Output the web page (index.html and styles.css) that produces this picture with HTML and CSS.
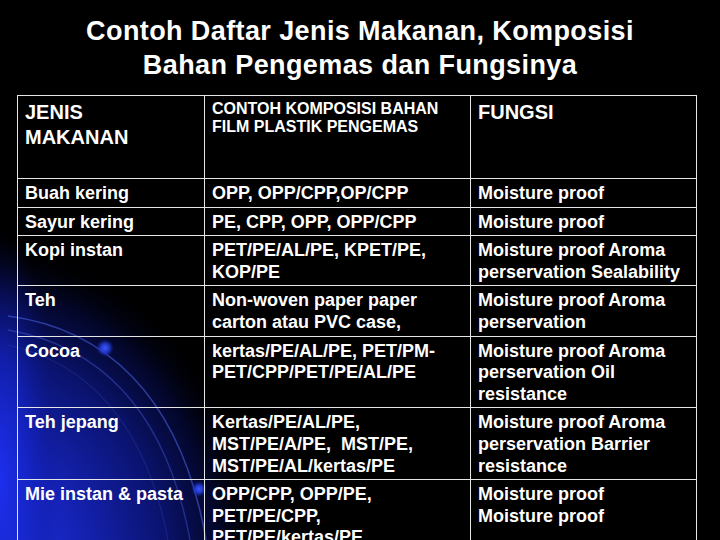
FILE: index.html
```html
<!DOCTYPE html>
<html>
<head>
<meta charset="utf-8">
<link rel="stylesheet" href="styles.css">
</head>
<body>
<div class="slide">
  <svg class="bg" width="720" height="540" viewBox="0 0 720 540" aria-hidden="true">
    <defs>
      <radialGradient id="g1">
        <stop offset="0" stop-color="#2436f0"/>
        <stop offset="0.35" stop-color="#1624bc"/>
        <stop offset="0.65" stop-color="#0b1472"/>
        <stop offset="0.85" stop-color="#030628"/>
        <stop offset="1" stop-color="#000000" stop-opacity="0"/>
      </radialGradient>
      <radialGradient id="g2">
        <stop offset="0" stop-color="#1e30f0" stop-opacity="0.95"/>
        <stop offset="0.5" stop-color="#1424c8" stop-opacity="0.6"/>
        <stop offset="1" stop-color="#0a1280" stop-opacity="0"/>
      </radialGradient>
      <radialGradient id="dot">
        <stop offset="0" stop-color="#3a58ff"/>
        <stop offset="0.5" stop-color="#2640e0" stop-opacity="0.8"/>
        <stop offset="1" stop-color="#1020a0" stop-opacity="0"/>
      </radialGradient>
    </defs>
    <rect width="720" height="540" fill="#000"/>
    <ellipse cx="-30" cy="570" rx="295" ry="335" fill="url(#g1)"/>
    <ellipse cx="0" cy="480" rx="60" ry="250" fill="url(#g2)"/>
    <path d="M 8 316 C 100 328, 180 390, 206 540" fill="none" stroke="#4a62e8" stroke-opacity="0.55" stroke-width="1.6"/>
    <path d="M 8 330 C 95 345, 165 405, 190 540" fill="none" stroke="#4a62e8" stroke-opacity="0.4" stroke-width="1.4"/>
    <path d="M 8 345 C 85 362, 145 420, 168 540" fill="none" stroke="#3a52d8" stroke-opacity="0.25" stroke-width="1.2"/>
    <circle cx="105" cy="348" r="9" fill="url(#dot)"/>
    <circle cx="199" cy="489" r="8" fill="url(#dot)"/>
  </svg>

  <div class="content">
    <h1 class="title">Contoh Daftar Jenis Makanan, Komposisi<br>Bahan Pengemas dan Fungsinya</h1>

    <table class="grid">
      <colgroup>
        <col class="c1"><col class="c2"><col class="c3">
      </colgroup>
      <tr class="head">
        <td class="h-big">JENIS<br>MAKANAN</td>
        <td class="h-small">CONTOH KOMPOSISI BAHAN<br>FILM PLASTIK PENGEMAS</td>
        <td class="h-big">FUNGSI</td>
      </tr>
      <tr>
        <td>Buah kering</td>
        <td>OPP, OPP/CPP,OP/CPP</td>
        <td>Moisture proof</td>
      </tr>
      <tr>
        <td>Sayur kering</td>
        <td>PE, CPP, OPP, OPP/CPP</td>
        <td>Moisture proof</td>
      </tr>
      <tr>
        <td>Kopi instan</td>
        <td>PET/PE/AL/PE, KPET/PE,<br>KOP/PE</td>
        <td>Moisture proof Aroma<br>perservation Sealability</td>
      </tr>
      <tr>
        <td>Teh</td>
        <td>Non-woven paper paper<br>carton atau PVC case,</td>
        <td>Moisture proof Aroma<br>perservation</td>
      </tr>
      <tr>
        <td>Cocoa</td>
        <td>kertas/PE/AL/PE, PET/PM-<br>PET/CPP/PET/PE/AL/PE</td>
        <td>Moisture proof Aroma<br>perservation Oil<br>resistance</td>
      </tr>
      <tr>
        <td>Teh jepang</td>
        <td>Kertas/PE/AL/PE,<br>MST/PE/A/PE,&nbsp; MST/PE,<br>MST/PE/AL/kertas/PE</td>
        <td>Moisture proof Aroma<br>perservation Barrier<br>resistance</td>
      </tr>
      <tr>
        <td>Mie instan &amp; pasta</td>
        <td>OPP/CPP, OPP/PE,<br>PET/PE/CPP,<br>PET/PE/kertas/PE</td>
        <td>Moisture proof<br>Moisture proof</td>
      </tr>
    </table>
  </div>
</div>
</body>
</html>
```

FILE: styles.css
```css
html, body {
  margin: 0;
  padding: 0;
  background: #000;
}

.slide {
  position: relative;
  width: 720px;
  height: 540px;
  overflow: hidden;
  background: #000;
  font-family: "Liberation Sans", Arial, sans-serif;
  color: #ffffff;
}

.bg {
  position: absolute;
  left: 0;
  top: 0;
  display: block;
}

.content {
  position: relative;
  padding-top: 14px;
}

.title {
  margin: 0;
  font-size: 27px;
  font-weight: bold;
  line-height: 34px;
  letter-spacing: 0.4px;
  text-align: center;
  padding-left: 0;
}

.grid {
  margin: 13px 0 0 17px;
  width: 679px;
  table-layout: fixed;
  border-collapse: collapse;
  border: 1px solid #e6e6e6;
}

.c1 { width: 187px; }
.c2 { width: 266px; }
.c3 { width: 226px; }

.grid td {
  border: 1px solid #e6e6e6;
  padding: 4px 4px 2px 7px;
  vertical-align: top;
  font-size: 18px;
  font-weight: bold;
  line-height: 21.6px;
  white-space: nowrap;
  overflow: hidden;
}

.grid .head td {
  padding-bottom: 28px;
}

.grid td.h-big {
  font-size: 20px;
  line-height: 25px;
}

.grid td.h-small {
  font-size: 16px;
  line-height: 18.4px;
}
```
